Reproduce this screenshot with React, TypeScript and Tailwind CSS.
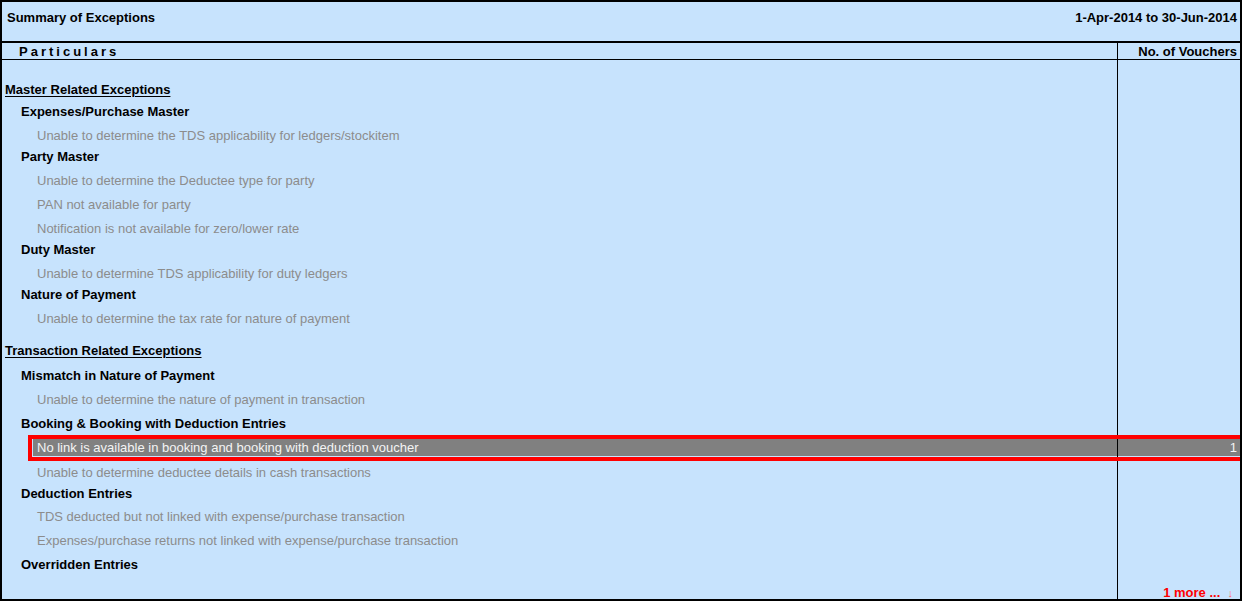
import type { ReactNode } from 'react';

const font = { fontFamily: '"Liberation Sans", Arial, sans-serif' };

// one line of the report: left particulars cell + right voucher count cell
function Row({ h, className = '', children, right }: { h: string; className?: string; children?: ReactNode; right?: ReactNode }) {
  return (
    <div className={`flex ${h}`}>
      <div className={`flex-1 flex ${className}`}>{children}</div>
      <div className="w-[123px] border-l border-black">{right}</div>
    </div>
  );
}

const Section = ({ label, h = 'h-[21px]', extra = 'items-center' }: { label: string; h?: string; extra?: string }) => (
  <Row h={h} className={`pl-[3px] ${extra}`}>
    <span className="font-bold text-black underline underline-offset-[2px] decoration-1">{label}</span>
  </Row>
);

const Group = ({ label, h = 'h-[21px]', extra = 'items-center' }: { label: string; h?: string; extra?: string }) => (
  <Row h={h} className={`pl-[19px] ${extra}`}>
    <span className="font-bold text-black">{label}</span>
  </Row>
);

const Item = ({ label, h = 'h-[24px]', extra = 'items-center pt-[2px]' }: { label: string; h?: string; extra?: string }) => (
  <Row h={h} className={`pl-[35px] ${extra}`}>
    <span className="text-[#8c8c8c]">{label}</span>
  </Row>
);

export default function App() {
  return (
    <div style={font} className="w-[1242px] h-[601px] bg-[#c7e3fd] border-2 border-black flex flex-col text-[13px] leading-[15px] overflow-hidden">
      {/* title */}
      <div className="h-[41px] shrink-0 flex justify-between items-start pt-[8px] pl-[5px] pr-[3px] border-b-2 border-black font-bold text-black">
        <span>Summary of Exceptions</span>
        <span>1-Apr-2014 to 30-Jun-2014</span>
      </div>

      {/* column heads */}
      <div className="flex h-[17px] shrink-0 border-b border-black font-bold text-black">
        <div className="flex-1 flex items-center pl-[17px] tracking-[3px]">Particulars</div>
        <div className="w-[123px] border-l border-black flex items-center justify-end pr-[3px]">No. of Vouchers</div>
      </div>

      <div className="flex-1 flex flex-col relative overflow-hidden">
        <Row h="h-[19px]" />
        <Section label="Master Related Exceptions" />
        <Group label="Expenses/Purchase Master" h="h-[22px]" />
        <Item label="Unable to determine the TDS applicability for ledgers/stockitem" />
        <Group label="Party Master" />
        <Item label="Unable to determine the Deductee type for party" />
        <Item label="PAN not available for party" />
        <Item label="Notification is not available for zero/lower rate" />
        <Group label="Duty Master" />
        <Item label="Unable to determine TDS applicability for duty ledgers" />
        <Group label="Nature of Payment" />
        <Item label="Unable to determine the tax rate for nature of payment" />
        <Row h="h-[11px]" />
        <Section label="Transaction Related Exceptions" h="h-[25px]" extra="items-start pt-[3px]" />
        <Group label="Mismatch in Nature of Payment" />
        <Item label="Unable to determine the nature of payment in transaction" />
        <Group label="Booking & Booking with Deduction Entries" h="h-[25px]" extra="items-center pt-[2px]" />

        {/* selected line */}
        <div className="flex h-[26px] shrink-0 relative">
          <div className="flex-1 pl-[31px] pt-[4px]">
            <div className="h-[17px] bg-[#808080] flex items-center pl-[4px] text-[#f4f4f4]">
              No link is available in booking and booking with deduction voucher
            </div>
          </div>
          <div className="w-[123px] border-l border-black pt-[4px]">
            <div className="h-[17px] bg-[#808080] flex items-center justify-end pr-[3px] text-[#f4f4f4]">1</div>
          </div>
          <div className="absolute left-[26px] right-[-6px] top-0 bottom-0 border-4 border-[#ff0000]" />
        </div>

        <Item label="Unable to determine deductee details in cash transactions" h="h-[22px]" extra="items-center" />
        <Group label="Deduction Entries" h="h-[20px]" />
        <Item label="TDS deducted but not linked with expense/purchase transaction" />
        <Item label="Expenses/purchase returns not linked with expense/purchase transaction" />
        <Group label="Overridden Entries" h="h-[24px]" extra="items-center pt-[2px]" />

        <div className="flex flex-1">
          <div className="flex-1" />
          <div className="w-[123px] border-l border-black flex items-end justify-end pr-[7px] font-bold text-[#ff0000] leading-[12px] whitespace-nowrap">
            1 more ...&nbsp;&nbsp;<span className="font-normal text-[11px] text-[#ff6a6a]">↓</span>
          </div>
        </div>
      </div>
    </div>
  );
}
